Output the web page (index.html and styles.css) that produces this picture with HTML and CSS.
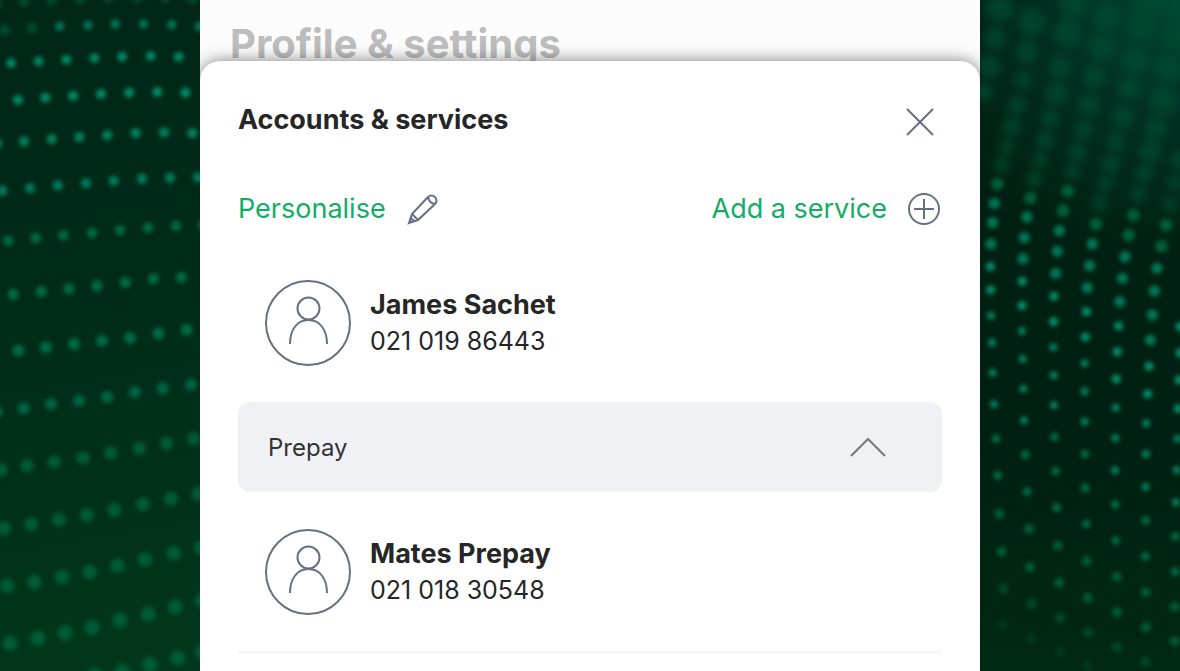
FILE: index.html
```html
<!DOCTYPE html>
<html lang="en">
<head>
    <meta charset="UTF-8">
    <meta name="viewport" content="width=device-width, initial-scale=1.0">
    <title>Accounts &amp; services</title>
    <link rel="stylesheet" href="styles.css">
</head>
<body>
    <div class="page">
        <svg class="dots dots-left" viewBox="0 0 600 2013" preserveAspectRatio="xMidYMid slice" aria-hidden="true">
            <g class="dot-faint">
                <path stroke-width="34" d="M-10 10h0M72 4h0M155 0h0M240 -4h0M325 -8h0M410 -8h0M495 -8h0M578 -6h0M14 90h0M96 84h0"/>
            </g>
            <g class="dot-bright">
                <path opacity=".8" stroke-width="28" d="M179 79h0M264 76h0M346 72h0M430 72h0M515 74h0M598 79h0"/>
                <path stroke-width="29" d="M33 189h0M116 184h0M199 179h0M283 174h0M366 170h0M452 168h0M536 171h0"/>
                <path stroke-width="30" d="M54 300h0M136 293h0M219 288h0M303 282h0M387 278h0M472 276h0M556 278h0"/>
                <path opacity=".9" stroke-width="31" d="M-9 430h0M72 424h0M155 417h0M238 411h0M322 405h0M407 399h0M492 397h0M577 399h0"/>
                <path opacity=".85" stroke-width="31" d="M7 572h0M90 564h0M173 556h0M258 549h0M341 542h0M426 536h0M510 533h0M594 532h0"/>
            </g>
            <g class="dot-mid">
                <path stroke-width="32" d="M25 722h0M107 714h0M190 706h0M276 699h0M360 690h0M444 683h0M528 678h0M610 675h0"/>
                <path stroke-width="34" d="M40 883h0M124 875h0M207 867h0M291 857h0M376 847h0M460 837h0M544 832h0"/>
                <path stroke-width="36" d="M55 1051h0M138 1042h0M222 1032h0M306 1022h0M390 1014h0M475 1000h0M560 990h0"/>
                <path opacity=".9" stroke-width="37" d="M-10 1236h0M71 1225h0M153 1212h0M237 1202h0M321 1191h0M405 1177h0M488 1165h0M573 1154h0"/>
            </g>
            <g class="dot-low">
                <path stroke-width="40" d="M3 1410h0M81 1397h0M163 1386h0M249 1374h0M332 1359h0M418 1345h0M500 1330h0M582 1316h0"/>
                <path stroke-width="42" d="M12 1585h0M94 1573h0M177 1559h0M260 1545h0M343 1530h0M429 1513h0M513 1496h0M595 1481h0"/>
                <path stroke-width="44" d="M21 1757h0M103 1746h0M186 1731h0M269 1716h0M352 1697h0M435 1679h0M521 1660h0M604 1643h0"/>
                <path stroke-width="46" d="M30 1930h0M113 1915h0M195 1898h0M276 1882h0M360 1861h0M445 1842h0M526 1821h0M607 1802h0"/>
                <path stroke-width="46" d="M285 2026h0M367 2014h0M449 1994h0M533 1974h0M609 1956h0"/>
            </g>
        </svg>

        <main class="phone">
            <header class="screen-header">
                <h1>Profile &amp; settings</h1>
            </header>

            <section class="sheet">
                <div class="sheet-header">
                    <h2>Accounts &amp; services</h2>
                    <button type="button" class="close" aria-label="Close">
                        <svg width="28" height="28" viewBox="0 0 28 28"><path d="M1 1l26 26M27 1L1 27"/></svg>
                    </button>
                </div>

                <div class="actions">
                    <a href="#personalise">Personalise
                        <svg width="34" height="34" viewBox="0 0 34 34"><path d="M3 31l3-9L22 5q3-3 7 0 3 4 0 7L12 28zM6 22l6 6M22 5q1 6 7 7M3 31l5-2-3-3z"/></svg>
                    </a>
                    <a href="#add">Add a service
                        <svg width="34" height="34" viewBox="0 0 34 34"><circle cx="17" cy="17" r="15"/><path d="M17 7v20M7 17h20"/></svg>
                    </a>
                </div>

                <div class="account">
                    <svg class="avatar" width="86" height="86" viewBox="0 0 86 86"><circle cx="43" cy="43" r="42"/><circle cx="43.500" cy="28.500" r="11"/><path d="M25 64c0-14 7-24 18.500-24S62 50 62 64"/></svg>
                    <div>
                        <h3>James Sachet</h3>
                        <p>021 019 86443</p>
                    </div>
                </div>

                <button type="button" class="group" aria-expanded="true">
                    Prepay
                    <svg width="36" height="20" viewBox="0 0 36 20"><path d="M1 19L18 2l17 17"/></svg>
                </button>

                <div class="account last">
                    <svg class="avatar" width="86" height="86" viewBox="0 0 86 86"><circle cx="43" cy="43" r="42"/><circle cx="43.500" cy="28.500" r="11"/><path d="M25 64c0-14 7-24 18.500-24S62 50 62 64"/></svg>
                    <div>
                        <h3>Mates Prepay</h3>
                        <p>021 018 30548</p>
                    </div>
                </div>
            </section>
        </main>

        <svg class="dots dots-right" viewBox="0 0 600 2013" preserveAspectRatio="xMidYMid slice" aria-hidden="true">
            <g class="dot-haze">
                <path stroke-width="84" d="M60 25h0M155 65h0M280 15h0M262 100h0M380 50h0M365 140h0M485 80h0M465 180h0M590 110h0M568 205h0M548 300h0M500 0h0M590 20h0"/>
                <path stroke-width="68" d="M45 115h0M140 155h0M240 200h0M230 280h0M343 230h0M325 315h0M448 265h0M428 350h0M528 385h0M511 455h0M30 200h0"/>
                <path stroke-width="56" d="M12 275h0M130 240h0M110 315h0M95 380h0M210 355h0M195 420h0M311 390h0M293 455h0M408 425h0M393 490h0M493 522h0M600 480h0"/>
                <path stroke-width="48" d="M80 440h0M65 495h0M180 480h0M162 537h0M278 515h0M376 550h0M360 610h0M475 583h0M585 548h0M571 613h0"/>
            </g>
            <g class="dot-mid">
                <path opacity=".8" stroke-width="38" d="M52 552h0M151 594h0M263 573h0M249 632h0M348 672h0M460 645h0M446 705h0M558 675h0M545 739h0"/>
            </g>
            <g class="dot-bright">
                <path opacity=".8" stroke-width="34" d="M43 610h0M38 668h0M33 732h0M141 651h0M133 713h0M129 776h0M238 692h0M232 754h0M227 820h0M337 732h0M329 797h0M322 863h0M435 770h0M427 835h0M420 905h0M531 805h0M523 873h0M517 945h0M511 1020h0"/>
                <path stroke-width="28" d="M31 800h0M32 870h0M127 844h0M126 917h0M222 889h0M221 965h0M319 935h0M316 1011h0M416 978h0M412 1055h0M409 1137h0M507 1099h0M503 1182h0M600 980h0M600 1059h0M597 1140h0M595 1226h0"/>
                <path opacity=".9" stroke-width="24" d="M33 947h0M36 1028h0M38 1118h0M42 1213h0M126 993h0M128 1077h0M130 1166h0M132 1261h0M220 1042h0M221 1126h0M222 1216h0M314 1090h0M314 1174h0M314 1265h0M407 1223h0M406 1314h0M405 1411h0M499 1270h0M498 1362h0M497 1460h0M593 1316h0M590 1410h0M588 1507h0"/>
            </g>
            <g class="dot-mid">
                <path stroke-width="26" d="M48 1316h0M53 1426h0M136 1364h0M141 1475h0M224 1311h0M227 1413h0M230 1523h0M315 1362h0M316 1464h0M319 1572h0M406 1514h0M407 1621h0M497 1561h0M496 1669h0M586 1609h0M586 1715h0"/>
            </g>
            <g class="dot-low">
                <path stroke-width="30" d="M58 1542h0M65 1655h0M147 1587h0M150 1702h0M234 1637h0M237 1748h0M320 1684h0M323 1794h0M410 1731h0M411 1837h0M497 1777h0M498 1882h0M584 1821h0M584 1924h0"/>
                <path opacity=".6" stroke-width="32" d="M70 1765h0M155 1811h0M240 1854h0M325 1898h0M411 1941h0M496 1985h0"/>
                <path opacity=".3" stroke-width="34" d="M68 1875h0M153 1917h0M240 1955h0M322 1997h0"/>
            </g>
        </svg>
    </div>
</body>
</html>
```
FILE: styles.css
```css
* {
    box-sizing: border-box;
}
body {
    font-family: Inter, "Liberation Sans", sans-serif;
    background-color: #002a18;
    color: #262626;
    margin: 0;
}
h1, h2, h3, p {
    margin: 0;
}
.page {
    display: grid;
    grid-template-columns: minmax(0, 1fr) minmax(0, 780px) minmax(0, 1fr);
    min-height: 100vh;
}

/* dotted backdrop */
.dots {
    display: block;
    width: 100%;
    height: 100vh;
    fill: none;
    stroke-linecap: round;
}
.dots-left {
    background: linear-gradient(170deg, #002618 0%, #002b1a 45%, #003319 80%, #00381b 100%);
}
.dots-right {
    background: radial-gradient(circle at 100% 0, #004532 0, #002e20 130px, #002013 260px, transparent 420px), linear-gradient(#002013 0%, #002013 65%, #002812 100%);
}
.dots g {
    filter: blur(6px);
}
.dots .dot-haze {
    stroke: #004a31;
    opacity: 0.75;
    filter: blur(12px);
}
.dot-faint {
    stroke: #00492f;
}
.dot-bright {
    stroke: #048a64;
}
.dot-mid {
    stroke: #006a47;
}
.dot-low {
    stroke: #005b37;
}

/* app screen */
.phone {
    display: flex;
    flex-direction: column;
    background-color: #fcfcfc;
    overflow: hidden;
}
.screen-header {
    height: 61px;
    padding: 20px 30px 0;
}
.screen-header h1 {
    font-size: 40px;
    line-height: 48px;
    font-weight: 700;
    color: #bdbdbd;
    white-space: nowrap;
}
.sheet {
    position: relative;
    flex: 1;
    padding: 35px 38px 0;
    background-color: #fff;
    border-radius: 20px 20px 0 0;
    box-shadow: 0 0 16px rgba(0, 0, 0, 0.5);
}
.sheet svg {
    fill: none;
    stroke: #667085;
    stroke-width: 2;
    flex-shrink: 0;
}
.sheet-header {
    display: flex;
    justify-content: space-between;
    align-items: flex-start;
    height: 48px;
}
.sheet-header h2 {
    font-size: 27px;
    line-height: 48px;
    font-weight: 700;
}
.close {
    display: flex;
    margin-top: 4px;
    padding: 8px;
    border: none;
    background: none;
    cursor: pointer;
}
.actions {
    display: flex;
    justify-content: space-between;
    align-items: center;
    height: 40px;
    margin: 45px 0 14px;
    padding-right: 1px;
}
.actions a {
    display: flex;
    align-items: center;
    gap: 20px;
    font-size: 27px;
    line-height: 36px;
    color: #12ad65;
    text-decoration: none;
}
.account {
    display: flex;
    align-items: center;
    gap: 19px;
    padding: 37px 27px 36px;
}
.account h3, .account p {
    font-size: 27px;
    line-height: 37px;
}
.account h3 {
    font-weight: 700;
}
.account p {
    font-size: 25px;
}
.account.last {
    border-bottom: 3px solid #f8f8f8;
}
.group {
    display: flex;
    justify-content: space-between;
    align-items: center;
    width: 100%;
    height: 90px;
    padding: 0 56px 0 30px;
    border: none;
    border-radius: 12px;
    background-color: #f0f1f5;
    color: #333;
    font-family: inherit;
    font-size: 24px;
    cursor: pointer;
}
.group svg {
    stroke: #777;
}
```
